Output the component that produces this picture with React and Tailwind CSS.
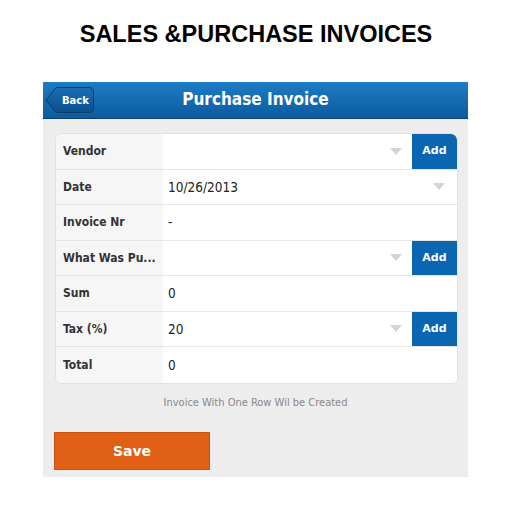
import React from "react";

const rows = [
  { label: "Vendor", value: "", select: true, add: true },
  { label: "Date", value: "10/26/2013", select: true },
  { label: "Invoice Nr", value: "-" },
  { label: "What Was Pu...", value: "", select: true, add: true },
  { label: "Sum", value: "0" },
  { label: "Tax (%)", value: "20", select: true, add: true },
  { label: "Total", value: "0" },
];

function Caret() {
  return (
    <svg width="12" height="7" viewBox="0 0 12 7">
      <path d="M0 0 L12 0 L6 7 Z" fill="#d4d4d4" />
    </svg>
  );
}

function Row({ row, first, last }) {
  return (
    <div className={`flex h-[35.5px] ${last ? "" : "border-b border-[#e6e6e6]"}`}>
      <div
        className={`w-[107px] bg-[#f6f6f6] flex items-center pl-[7px] text-[12px] font-bold text-[#333] ${first ? "rounded-tl-[6px]" : ""} ${last ? "rounded-bl-[6px]" : ""}`}
        style={{ fontFamily: "'DejaVu Sans Condensed', 'DejaVu Sans', sans-serif" }}
      >
        {row.label}
      </div>
      <div className="flex-1 flex items-center pl-[5px] text-[13.5px] text-[#222] bg-white" style={{ fontFamily: "'DejaVu Sans Condensed', 'DejaVu Sans', sans-serif" }}>
        <span className="flex-1">{row.value}</span>
        {row.select && (
          <span className={row.add ? "mr-[10px]" : "mr-[12px]"}>
            <Caret />
          </span>
        )}
      </div>
      {row.add && (
        <div className={`w-[45px] bg-[#0a66b0] text-white text-[11px] font-bold flex items-center justify-center ${first ? "rounded-tr-[6px]" : ""}`}>
          Add
        </div>
      )}
    </div>
  );
}

export default function App() {
  return (
    <div className="w-[512px] h-[512px] bg-white relative" style={{ fontFamily: "Tahoma, 'DejaVu Sans', sans-serif" }}>
      <div className="h-[82px] pt-[19px] text-center text-[23.5px] leading-[30px] font-bold text-black" style={{ fontFamily: "'Liberation Sans', Arial, sans-serif" }}>
        SALES &amp;PURCHASE INVOICES
      </div>
      <div className="ml-[43px] w-[425px] h-[395px] bg-[#ededed] flex flex-col">
        {/* header */}
        <div className="h-[37px] bg-gradient-to-b from-[#1d7cc6] to-[#0b5b9e] border-b border-[#0a3f6e] relative flex items-center justify-center">
          <div className="absolute left-[2px] top-[5px] h-[26px] w-[49px]">
            <svg width="49" height="26" viewBox="0 0 49 26" className="absolute inset-0">
              <defs>
                <linearGradient id="bk" x1="0" y1="0" x2="0" y2="1">
                  <stop offset="0" stopColor="#1a6fb5" />
                  <stop offset="1" stopColor="#0a4f8c" />
                </linearGradient>
              </defs>
              <path d="M11 0.5 H44 Q48.5 0.5 48.5 5 V21 Q48.5 25.5 44 25.5 H11 L0.8 13 Z" fill="url(#bk)" stroke="#0a3c6a" strokeWidth="1" />
            </svg>
            <span className="absolute left-[17px] top-[6px] text-[10px] font-bold text-white">Back</span>
          </div>
          <span className="text-white text-[17px] font-bold" style={{ fontFamily: "'DejaVu Sans Condensed', 'DejaVu Sans', sans-serif" }}>Purchase Invoice</span>
        </div>
        {/* card */}
        <div className="mt-[14px] ml-[12px] mr-[10px] bg-white rounded-[6px] border border-[#e2e2e2] flex flex-col overflow-hidden">
          {rows.map((r, i) => (
            <Row key={r.label} row={r} first={i === 0} last={i === rows.length - 1} />
          ))}
        </div>
        <div className="mt-[11px] text-center text-[11px] text-[#888]" style={{ fontFamily: "'DejaVu Sans Condensed', 'DejaVu Sans', sans-serif" }}>
          Invoice With One Row Wil be Created
        </div>
        <div className="mt-[21px] ml-[11px] w-[156px] h-[38px] bg-[#e06016] border border-[#c9540f] flex items-center justify-center text-white text-[14px] font-bold">
          Save
        </div>
      </div>
    </div>
  );
}
